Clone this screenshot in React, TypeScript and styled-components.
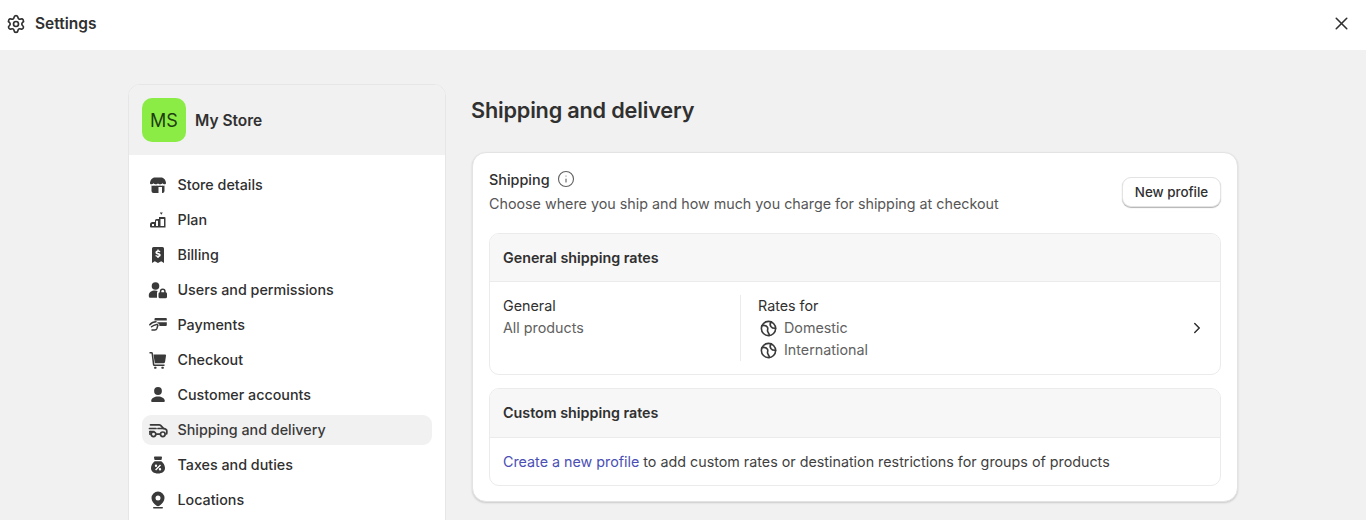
import React from 'react';
import styled, { createGlobalStyle } from 'styled-components';
import { ChevronRight, Info, Settings, X } from 'lucide-react';

const GlobalStyle = createGlobalStyle`
  html, body {
    margin: 0;
    height: 520px;
    overflow: hidden;
    background: #f1f1f1;
    font-family: Inter, "Liberation Sans", sans-serif;
    color: #303030;
  }
`;

const StoreIcon = () => (
  <svg viewBox="0 0 20 20" width="20" height="20" fill="currentColor">
    <path d="M6 2.500h8c2 .6 3.600 2.600 4 5.200.1.900-.6 1.600-1.500 1.600-.8 0-1.500-.4-2-1-.5.6-1.500 1-2.500 1s-1.600-.4-2-1c-.4.6-1 1-2 1s-2-.4-2.500-1c-.5.6-1.200 1-2 1C2.600 9.300 1.900 8.600 2 7.700c.4-2.600 2-4.600 4-5.200z" />
    <path
      fillRule="evenodd"
      d="M3.500 10.500c1 .3 1.900.2 2.500-.1.900.4 2.100.4 3 0 .9.400 2.100.4 3 0 .9.400 1.800.4 2.500.1.700.3 1.200.3 2 0V16a2 2 0 0 1-2 2H5.500a2 2 0 0 1-2-2zM10.500 12v6H14v-6z"
    />
  </svg>
);

const PlanIcon = () => (
  <svg viewBox="0 0 20 20" width="20" height="20" fill="currentColor">
    <path d="M11.800 2.500h3l-1.500 2.300z" />
    <path
      fillRule="evenodd"
      d="M11 7h5.500a1 1 0 0 1 1 1v9.500H3a1 1 0 0 1-1-1v-2A2.500 2.500 0 0 1 4.500 12H7v-1.500A1.500 1.500 0 0 1 8.500 9H11zM4 14v2h2v-2zm4-3.200V16h2v-5.200zM12.500 9v7h3.500V9z"
    />
  </svg>
);

const BillingIcon = () => (
  <svg viewBox="0 0 20 20" width="20" height="20" fill="currentColor">
    <path
      fillRule="evenodd"
      d="M5.500 2h9A1.500 1.500 0 0 1 16 3.500V18l-2.800-1.800L10 18l-3.200-1.800L4 18V3.500A1.500 1.500 0 0 1 5.500 2zM9.300 4.500v.9c-1.100.2-1.900 1-1.900 2 0 1.200 1 1.700 2.200 2 .9.200 1.200.4 1.200.7s-.4.600-1 .600c-.7 0-1.300-.3-1.800-.7l-.8 1.100c.6.500 1.300.8 2.100 1v.9h1.400v-.9c1.200-.2 2-1 2-2.100 0-1.200-1-1.700-2.300-2-.8-.2-1.100-.4-1.100-.7s.3-.5.900-.5c.5 0 1.100.2 1.500.5l.8-1.100c-.5-.4-1.100-.7-1.800-.8v-.9z"
    />
  </svg>
);

const UsersIcon = () => (
  <svg viewBox="0 0 20 20" width="20" height="20" fill="currentColor">
    <circle cx="7.500" cy="6" r="3.800" />
    <path d="M.8 15.500c0-3.200 2.800-5 6.200-5 1 0 1.900.2 2.700.5-.5.600-.7 1.200-.7 2v4.800H2.300A1.500 1.500 0 0 1 .8 16.300z" />
    <path
      fillRule="evenodd"
      d="M14.800 8.500a2.900 2.900 0 0 1 2.900 2.900v.8a1.500 1.500 0 0 1 1.300 1.500v3a1.500 1.500 0 0 1-1.500 1.500h-5.500a1.500 1.500 0 0 1-1.500-1.500v-3a1.500 1.500 0 0 1 1.300-1.500v-.8a2.900 2.900 0 0 1 3-2.900zm0 1.500a1.400 1.400 0 0 0-1.500 1.400v.8h2.900v-.8a1.400 1.400 0 0 0-1.400-1.400z"
    />
  </svg>
);

const PaymentsIcon = () => (
  <svg viewBox="0 0 20 20" width="20" height="20" fill="currentColor">
    <path d="M7.500 3h10.500a.8.800 0 0 1 .8.800V5.500H6.500V4a1 1 0 0 1 1-1z" />
    <path d="M9.500 7.300h9.300v2.700a1 1 0 0 1-1 1h-6.500c.3-.7.100-1.700-.5-2.200-.4-.4-1-.6-1.700-.6z" />
    <path
      d="M1.800 9.800C3.300 8 5.600 6.800 8 6.800M3.500 11.800c1-.9 2.800-2 5.200-2.400.8-.1 1.400.5 1.100 1.200l-.9 2.800c-.4 1.100-1 1.600-2.100 1.600H4"
      fill="none"
      stroke="currentColor"
      strokeWidth="1.500"
      strokeLinecap="round"
      strokeLinejoin="round"
    />
  </svg>
);

const CartIcon = () => (
  <svg viewBox="0 0 20 20" width="20" height="20" fill="currentColor">
    <path d="M1.500 2h1.900A1.600 1.600 0 0 1 5 3.400L6.400 14.500h10.100V16H6.200a1.300 1.300 0 0 1-1.300-1.100L3.500 3.500H1.500z" />
    <path d="M5.500 4.500H17a1 1 0 0 1 1 1.200l-.9 6a1.800 1.800 0 0 1-1.800 1.500H6.800z" />
    <rect x="6.200" y="16.800" width="2.200" height="2" rx=".5" />
    <rect x="13.500" y="16.800" width="2.200" height="2" rx=".5" />
  </svg>
);

const PersonIcon = () => (
  <svg viewBox="0 0 20 20" width="20" height="20" fill="currentColor">
    <circle cx="10" cy="6" r="3.900" />
    <path d="M10 11.500c3.700 0 6.500 1.700 6.800 4.300.1.800-.5 1.200-1.200 1.200H4.400c-.7 0-1.300-.4-1.200-1.200.3-2.600 3.100-4.300 6.800-4.300z" />
  </svg>
);

const TruckIcon = () => (
  <svg
    viewBox="0 0 20 20"
    width="20"
    height="20"
    fill="none"
    stroke="currentColor"
    strokeWidth="1.700"
    strokeLinecap="round"
    strokeLinejoin="round"
  >
    <path d="M2.500 4.800h8.700c.6 0 1 .2 1.400.6l2.800 3c1.700.3 3.300 1 3.400 2.400v2.500c0 .4-.3.700-.7.700" />
    <path d="M1.500 8.500h6.500M2 11.500h4M15.400 8.500H10" />
    <path d="M8.500 14.200h3.500" />
    <path d="M2 11.500v2.700" />
    <circle cx="5.500" cy="14.300" r="2.300" />
    <circle cx="14.800" cy="14.300" r="2.300" />
  </svg>
);

const MoneyBagIcon = () => (
  <svg viewBox="0 0 20 20" width="20" height="20" fill="currentColor">
    <path d="M7 1.500h6a1 1 0 0 1 1 1.200L13.400 5H6.600L6 2.700a1 1 0 0 1 1-1.200z" />
    <path
      fillRule="evenodd"
      d="M6.700 6.200h6.600c1.800 1.500 3.700 3.900 3.700 6.800 0 3.400-2.700 5.500-7 5.500s-7-2.100-7-5.500c0-2.900 1.900-5.300 3.700-6.800zM12 9.500l-4.900 4.900 1 1 4.900-4.900zM8 9.600a1.200 1.200 0 1 0 0 2.400 1.200 1.200 0 0 0 0-2.400zm4 3.400a1.200 1.200 0 1 0 0 2.400 1.200 1.200 0 0 0 0-2.400z"
    />
  </svg>
);

const PinIcon = () => (
  <svg viewBox="0 0 20 20" width="20" height="20" fill="currentColor">
    <path
      fillRule="evenodd"
      d="M10 1.500a6.500 6.500 0 0 1 6.500 6.500c0 3-2.300 5.700-4.700 7.600-1.100.9-2.500.9-3.600 0C5.800 13.700 3.500 11 3.500 8A6.500 6.500 0 0 1 10 1.500zm0 4a2.500 2.500 0 1 0 0 5 2.500 2.500 0 0 0 0-5z"
    />
    <rect x="5" y="17" width="10" height="1.600" rx=".8" />
  </svg>
);

const GlobeIcon = () => (
  <svg
    viewBox="0 0 20 20"
    width="19"
    height="19"
    fill="none"
    stroke="currentColor"
    strokeWidth="1.700"
    strokeLinecap="round"
    strokeLinejoin="round"
  >
    <circle cx="10" cy="10" r="7.500" />
    <path d="M3.200 7c2.600-.6 4.900-.1 5.800 1.900.8 1.800-.6 3 .2 4.500.5 1 1.300 1.800 1.800 3.900" />
    <path d="M13 3c-1.500 1.500-1.500 3.400-.5 4.800 1 1.300 3 2.200 5 1.900" />
  </svg>
);

const navItems = [
  { label: 'Store details', icon: <StoreIcon /> },
  { label: 'Plan', icon: <PlanIcon /> },
  { label: 'Billing', icon: <BillingIcon /> },
  { label: 'Users and permissions', icon: <UsersIcon /> },
  { label: 'Payments', icon: <PaymentsIcon /> },
  { label: 'Checkout', icon: <CartIcon /> },
  { label: 'Customer accounts', icon: <PersonIcon /> },
  { label: 'Shipping and delivery', icon: <TruckIcon />, active: true },
  { label: 'Taxes and duties', icon: <MoneyBagIcon /> },
  { label: 'Locations', icon: <PinIcon /> },
];

const App = () => {
  return (
    <>
      <GlobalStyle />
      <TopBar>
        <TitleGroup>
          <Settings size={20} strokeWidth={2} />
          <Title>Settings</Title>
        </TitleGroup>
        <X size={21} strokeWidth={1.8} />
      </TopBar>
      <Page>
        <Sidebar>
          <StoreHeader>
            <Avatar>MS</Avatar>
            <StoreName>My Store</StoreName>
          </StoreHeader>
          <NavList>
            {navItems.map((item) => (
              <NavRow key={item.label}>
                <NavPill $active={item.active}>
                  <NavIcon>{item.icon}</NavIcon>
                  <NavLabel>{item.label}</NavLabel>
                </NavPill>
              </NavRow>
            ))}
          </NavList>
        </Sidebar>
        <Main>
          <Heading>Shipping and delivery</Heading>
          <Card>
            <CardTop>
              <div>
                <CardTitleRow>
                  <CardTitle>Shipping</CardTitle>
                  <Info size={18} strokeWidth={1.5} color="#616161" />
                </CardTitleRow>
                <Muted>Choose where you ship and how much you charge for shipping at checkout</Muted>
              </div>
              <OutlineButton>New profile</OutlineButton>
            </CardTop>
            <SubCard>
              <SubHeader>General shipping rates</SubHeader>
              <ProfileRow>
                <ProfileName>
                  <Line>General</Line>
                  <MutedLine>All products</MutedLine>
                </ProfileName>
                <RatesColumn>
                  <Line>Rates for</Line>
                  <ZoneLine>
                    <GlobeIcon />
                    Domestic
                  </ZoneLine>
                  <ZoneLine>
                    <GlobeIcon />
                    International
                  </ZoneLine>
                </RatesColumn>
                <ChevronRight size={18} strokeWidth={2} />
              </ProfileRow>
            </SubCard>
            <SubCard>
              <SubHeader $tall>Custom shipping rates</SubHeader>
              <CustomRow>
                <TextLink>Create a new profile</TextLink> to add custom rates or destination
                restrictions for groups of products
              </CustomRow>
            </SubCard>
          </Card>
        </Main>
      </Page>
    </>
  );
};

export default App;

const TopBar = styled.header`
  display: flex;
  align-items: center;
  justify-content: space-between;
  height: 50px;
  padding: 0 14px 3px 6px;
  box-sizing: border-box;
  background: #ffffff;
  color: #303030;
`;

const TitleGroup = styled.div`
  display: flex;
  align-items: center;
  gap: 9px;
`;

const Title = styled.span`
  font-size: 15.5px;
  font-weight: 600;
`;

const Page = styled.div`
  display: flex;
  align-items: flex-start;
  gap: 26px;
  height: 470px;
  padding: 34px 0 0 128px;
  box-sizing: border-box;
  overflow: hidden;
  background: #f1f1f1;
`;

const Sidebar = styled.nav`
  flex: none;
  width: 318px;
  box-sizing: border-box;
  background: #ffffff;
  border: 1px solid #e6e6e6;
  border-radius: 12px;
  overflow: hidden;
`;

const StoreHeader = styled.div`
  display: flex;
  align-items: center;
  gap: 9px;
  height: 70px;
  padding: 0 13px;
  background: #f1f1f1;
`;

const Avatar = styled.div`
  display: flex;
  align-items: center;
  justify-content: center;
  width: 44px;
  height: 44px;
  border-radius: 10px;
  background: #8aec45;
  color: #1f3d10;
  font-size: 18px;
`;

const StoreName = styled.span`
  font-size: 15.5px;
  font-weight: 600;
`;

const NavList = styled.div`
  display: flex;
  flex-direction: column;
  padding: 12px 13px 40px;
`;

const NavRow = styled.div`
  display: flex;
  align-items: center;
  height: 35px;
`;

const NavPill = styled.div<{ $active?: boolean }>`
  display: flex;
  flex: 1;
  align-items: center;
  gap: 9.5px;
  height: 30px;
  padding: 0 0 0 6px;
  border-radius: 9px;
  background: ${(p) => (p.$active ? '#f1f1f1' : 'transparent')};
  color: ${(p) => (p.$active ? '#3a3a3a' : '#303030')};
`;

const NavIcon = styled.span`
  display: flex;
  width: 20px;
  height: 20px;
  color: #3a3a3a;
`;

const NavLabel = styled.span`
  padding-bottom: 1px;
  font-size: 14.3px;
  font-weight: 500;
`;

const Main = styled.main`
  flex: none;
  width: 766px;
`;

const Heading = styled.h1`
  margin: 0 0 16px -1px;
  font-size: 21.7px;
  line-height: 52px;
  font-weight: 600;
  letter-spacing: -0.2px;
  color: #303030;
`;

const Card = styled.section`
  display: flex;
  flex-direction: column;
  gap: 13px;
  box-sizing: border-box;
  width: 766px;
  padding: 14px 16px 15px;
  background: #ffffff;
  border: 1px solid #e3e3e3;
  border-radius: 14px;
  box-shadow: 0 1px 2px rgba(0, 0, 0, 0.16);
`;

const CardTop = styled.div`
  display: flex;
  align-items: center;
  justify-content: space-between;
  height: 49px;
  margin-bottom: 4px;
`;

const CardTitleRow = styled.div`
  display: flex;
  align-items: center;
  gap: 7.5px;
  height: 24px;
`;

const CardTitle = styled.span`
  font-size: 14.4px;
  font-weight: 500;
`;

const Muted = styled.div`
  margin-top: 1px;
  font-size: 14.3px;
  line-height: 24px;
  color: #565656;
`;

const OutlineButton = styled.button`
  height: 30px;
  width: 99px;
  padding: 0;
  background: #ffffff;
  border: 1px solid #e3e3e3;
  border-radius: 9px;
  box-shadow: 0 1px 1px rgba(0, 0, 0, 0.3);
  font: 500 13.4px Inter, "Liberation Sans", sans-serif;
  color: #303030;
`;

const SubCard = styled.div`
  border: 1px solid #ebebeb;
  border-radius: 10px;
  overflow: hidden;
`;

const SubHeader = styled.div<{ $tall?: boolean }>`
  display: flex;
  align-items: center;
  height: ${(p) => (p.$tall ? '49px' : '48px')};
  box-sizing: border-box;
  padding: 0 13px ${(p) => (p.$tall ? '1px' : '0')};
  background: #f7f7f7;
  border-bottom: 1px solid #ebebeb;
  font-size: 14.3px;
  font-weight: 600;
`;

const ProfileRow = styled.div`
  display: flex;
  align-items: center;
  height: 92px;
  padding: 0 14px 0 13px;
`;

const ProfileName = styled.div`
  align-self: flex-start;
  width: 237px;
  padding-top: 13px;
`;

const RatesColumn = styled.div`
  flex: 1;
  align-self: flex-start;
  height: 66px;
  margin-top: 13px;
  padding-left: 17px;
  border-left: 1px solid #ebebeb;
`;

const Line = styled.div`
  font-size: 14.3px;
  line-height: 22px;
  color: #303030;
`;

const MutedLine = styled(Line)`
  color: #616161;
`;

const ZoneLine = styled(MutedLine)`
  display: flex;
  align-items: center;
  gap: 6px;
  & svg {
    color: #3a3a3a;
    margin-left: 1px;
  }
`;

const CustomRow = styled.div`
  display: block;
  height: 47px;
  padding: 0 13px;
  font-size: 14.3px;
  line-height: 47px;
  color: #3f3f3f;
`;

const TextLink = styled.a`
  color: #4a4fb5;
`;
